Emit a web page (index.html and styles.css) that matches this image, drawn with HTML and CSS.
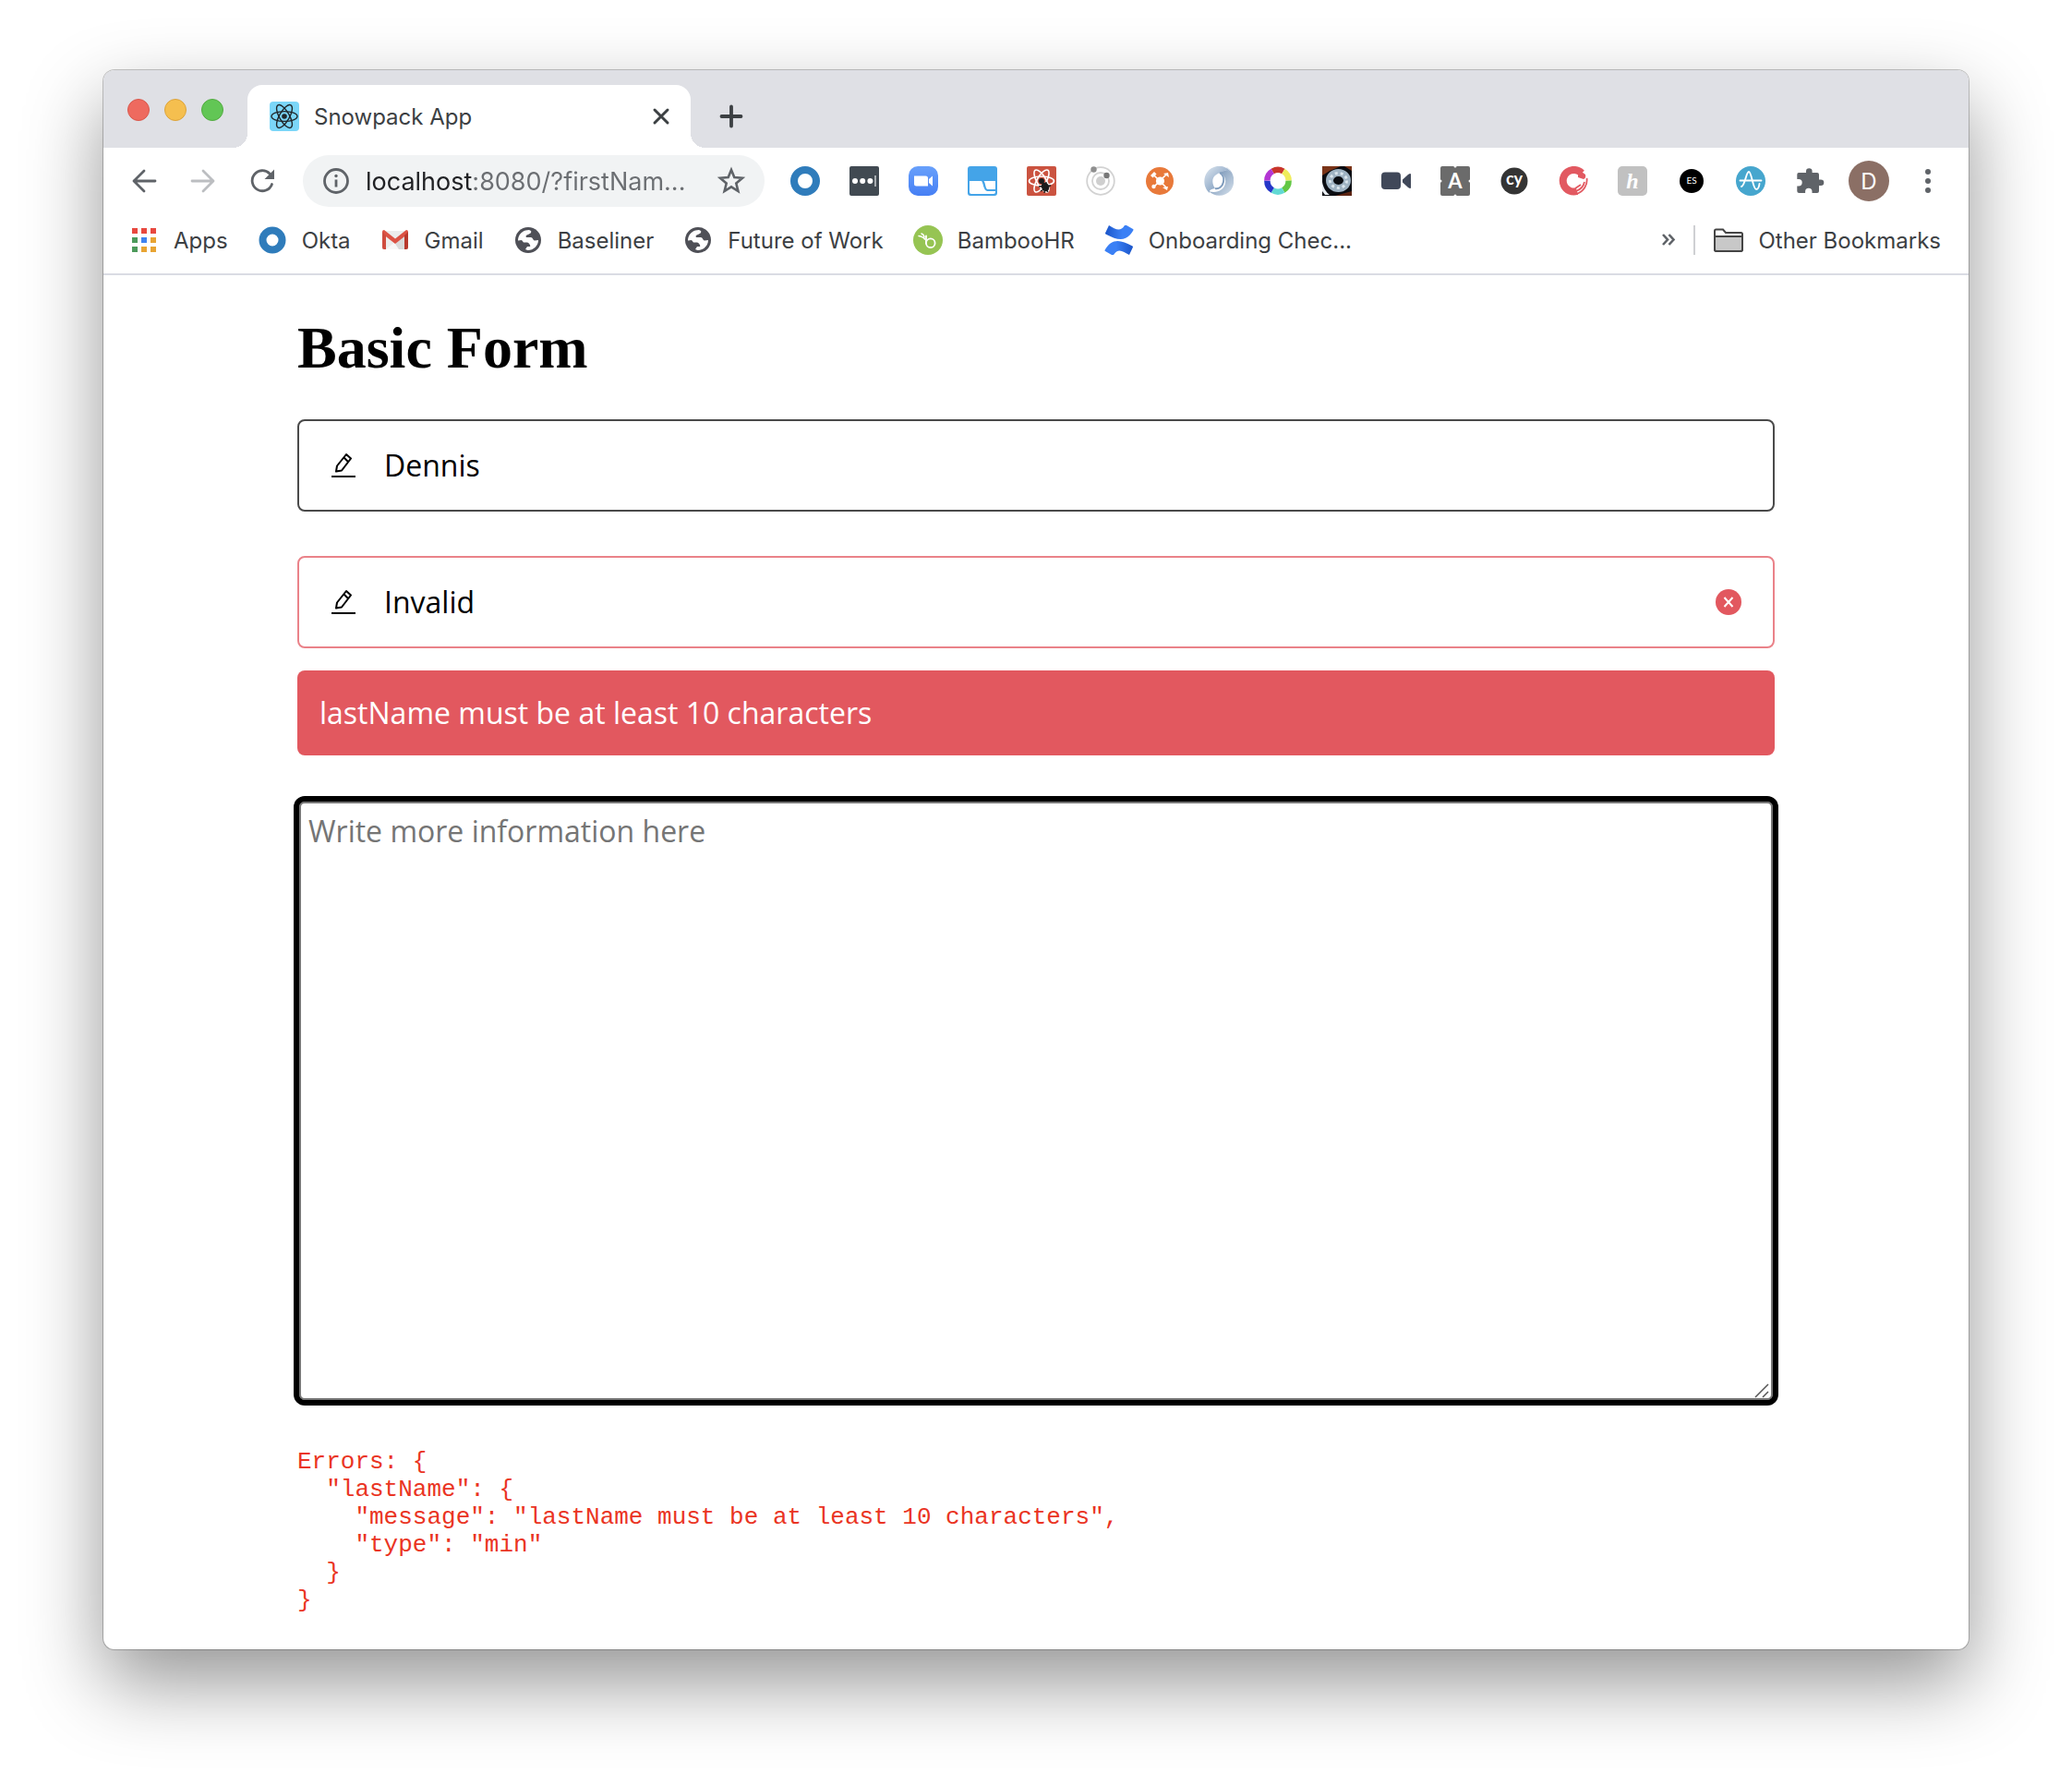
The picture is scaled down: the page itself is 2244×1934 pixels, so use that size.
FILE: index.html
```html
<!DOCTYPE html>
<html lang="en">
<head>
<meta charset="utf-8">
<meta name="viewport" content="width=device-width, initial-scale=1">
<title>Snowpack App</title>
<link rel="stylesheet" href="styles.css">
</head>
<body>
<div class="window">
  <header class="chrome">
    <div class="tab-strip">
      <div class="lights">
        <button class="light light-close" aria-label="Close window"></button>
        <button class="light light-minimise" aria-label="Minimise window"></button>
        <button class="light light-zoom" aria-label="Zoom window"></button>
      </div>
      <div class="tab">
        <svg class="icon" viewBox="0 0 32 32" aria-hidden="true">
          <rect width="32" height="32" rx="4" fill="#7bd6f8"/>
          <g fill="none" stroke="#20272b" stroke-width="1.4">
            <ellipse cx="16" cy="16" rx="14" ry="5.4"/>
            <ellipse cx="16" cy="16" rx="14" ry="5.4" transform="rotate(60 16 16)"/>
            <ellipse cx="16" cy="16" rx="14" ry="5.4" transform="rotate(120 16 16)"/>
          </g>
          <circle cx="16" cy="16" r="2.8" fill="#20272b"/>
        </svg>
        <span class="tab-title">Snowpack App</span>
        <button class="tab-close" aria-label="Close tab">
          <svg class="icon" viewBox="0 0 32 32"><path d="M9 9l14 14M23 9L9 23" stroke="#3c4043" stroke-width="3" stroke-linecap="round"/></svg>
        </button>
      </div>
      <button class="new-tab" aria-label="New tab">
        <svg class="icon" viewBox="0 0 32 32"><path d="M16 5.500v21M5.500 16h21" stroke="#3c4043" stroke-width="3.800" stroke-linecap="round"/></svg>
      </button>
    </div>

    <div class="toolbar">
      <button class="tool" aria-label="Back">
        <svg class="icon" viewBox="0 0 32 32" fill="none" stroke="#5f6368" stroke-width="2.800" stroke-linecap="round" stroke-linejoin="round"><path d="M28 16H5M16 5L5 16l11 11"/></svg>
      </button>
      <button class="tool" aria-label="Forward">
        <svg class="icon" viewBox="0 0 32 32" fill="none" stroke="#bcbec1" stroke-width="2.800" stroke-linecap="round" stroke-linejoin="round"><path d="M4 16h23M16 5l11 11-11 11"/></svg>
      </button>
      <button class="tool" aria-label="Reload">
        <svg class="icon" viewBox="0 0 32 32"><path d="M26.500 19.500A11 11 0 1 1 24 8" fill="none" stroke="#5f6368" stroke-width="2.800" stroke-linecap="round"/><path d="M29 3.500V14H18.500z" fill="#5f6368"/></svg>
      </button>
      <div class="omnibox">
        <svg class="icon" viewBox="0 0 32 32"><circle cx="16" cy="16" r="12.500" fill="none" stroke="#5f6368" stroke-width="2.800"/><path d="M16 14.500v8" stroke="#5f6368" stroke-width="2.800"/><circle cx="16" cy="10.500" r="1.700" fill="#5f6368"/></svg>
        <input class="url" type="text" aria-label="Address" value="localhost:8080/?firstNam...">
        <button class="star" aria-label="Bookmark this page">
          <svg class="icon" viewBox="0 0 32 32"><path d="M16 4l3.300 8.100 8.700.700-6.700 5.700 2.100 8.500L16 22.400 8.600 27l2.100-8.500L4 12.800l8.700-.700z" fill="none" stroke="#5f6368" stroke-width="2.600"/></svg>
        </button>
      </div>
      <button class="tool" aria-label="Okta">
        <svg class="icon" viewBox="0 0 32 32"><circle cx="16" cy="16" r="12" fill="none" stroke="#2f7cbb" stroke-width="8"/></svg>
      </button>
      <button class="tool" aria-label="Password manager">
        <svg class="icon" viewBox="0 0 32 32"><rect width="32" height="32" rx="2" fill="#414a52"/><g fill="#fff"><circle cx="6" cy="16" r="3"/><circle cx="14.200" cy="16" r="3"/><circle cx="22.400" cy="16" r="3"/></g><path d="M28 10v12" stroke="#b4b8bc" stroke-width="1.800"/></svg>
      </button>
      <button class="tool" aria-label="Video meeting">
        <svg class="icon" viewBox="0 0 32 32"><defs><linearGradient id="zoom" x1="0" y1="0" x2="0" y2="1"><stop offset="0" stop-color="#68a0fb"/><stop offset="1" stop-color="#467ff4"/></linearGradient></defs><rect width="32" height="32" rx="10" fill="url(#zoom)"/><path d="M6 10.500h12.500q2.500 0 2.500 2.500v8.500H8.500Q6 21.500 6 19zM22 14l4-3.500v11L22 18z" fill="#fff"/></svg>
      </button>
      <button class="tool" aria-label="Window layout">
        <svg class="icon" viewBox="0 0 32 32"><rect width="32" height="32" rx="3" fill="#44a4e8"/><path d="M2 16h13c2 2 2 10 6 11h9v1q0 2-2 2H4q-2 0-2-2z" fill="#fff"/><path d="M17.500 16H30v9h-8c-3 0-2.500-7-4.500-9z" fill="#fff"/></svg>
      </button>
      <button class="tool" aria-label="React developer tools">
        <svg class="icon" viewBox="0 0 32 32"><rect width="32" height="32" rx="2" fill="#cb5340"/><g fill="none" stroke="#fff" stroke-width="1.600"><ellipse cx="16" cy="16" rx="13.500" ry="5"/><ellipse cx="16" cy="16" rx="13.500" ry="5" transform="rotate(60 16 16)"/><ellipse cx="16" cy="16" rx="13.500" ry="5" transform="rotate(120 16 16)"/></g><circle cx="16" cy="16" r="3" fill="#1c1c1c"/><ellipse cx="20" cy="22.500" rx="4" ry="5" fill="#1c1c1c" transform="rotate(-25 20 22.500)"/><path d="M13 22l13-1M15 27l11-6M17 18l6 10M19 29l2-12" stroke="#1c1c1c" stroke-width="1.400"/></svg>
      </button>
      <button class="tool" aria-label="Orbit">
        <svg class="icon" viewBox="0 0 32 32"><circle cx="16" cy="16" r="5" fill="#cfcfcf"/><g fill="none" stroke="#d2d2d2" stroke-width="1.800"><circle cx="16" cy="16" r="9"/><circle cx="16" cy="16" r="14.800"/></g><circle cx="8.500" cy="3.500" r="3.200" fill="#8f8f8f"/><circle cx="22.500" cy="10" r="3.200" fill="#777"/></svg>
      </button>
      <button class="tool" aria-label="Network hub">
        <svg class="icon" viewBox="0 0 32 32"><circle cx="16" cy="16" r="15" fill="#e8793a"/><circle cx="16.500" cy="16" r="4.600" fill="#fff"/><g stroke="#fff" stroke-width="1.600"><path d="M9 9l14 14M23 9L10 22"/></g><path d="M6 10l4-4 2.500 2.500-4 4z" fill="#fff"/><path d="M20 8l5-1 1 5zM19 23l6-1-1 4z" fill="#fff"/><circle cx="9.500" cy="22" r="2.200" fill="#fff"/></svg>
      </button>
      <button class="tool" aria-label="JSON viewer">
        <svg class="icon" viewBox="0 0 32 32"><defs><linearGradient id="json1" x1="0" y1="0" x2="1" y2="1"><stop offset="0" stop-color="#dfe8f1"/><stop offset="1" stop-color="#5f83ad"/></linearGradient><linearGradient id="json2" x1="1" y1="1" x2="0" y2="0"><stop offset="0" stop-color="#d3dfeb"/><stop offset="1" stop-color="#3d6696"/></linearGradient></defs><path d="M6 29C-3 22-2 3 14 0c6-1 13 2 16 8-4-4-9-4-12-1C9 9 7 17 12 24c-3 1-7 1-6 5z" fill="url(#json1)"/><path d="M21 0c12 3 14 18 8 26-6 7-17 8-24 1 8 3 17-1 18-9 1-5-2-9-6-11 5-3 9-3 12 0-1-3-4-6-8-7z" fill="url(#json2)" opacity=".85"/><path d="M12 24c4 1 8-2 9-7 1-4-1-8-4-10" fill="none" stroke="#7f9cbd" stroke-width="2"/></svg>
      </button>
      <button class="tool" aria-label="Colour picker">
        <svg class="icon" viewBox="0 0 32 32" fill="none" stroke-width="6.500"><path d="M10.200 5.500a11.600 11.600 0 0 1 11.600 0" stroke="#c8352b"/><path d="M21.800 5.500a11.600 11.600 0 0 1 5.800 10.100" stroke="#efec5c"/><path d="M27.600 15.600a11.600 11.600 0 0 1-5.800 10.400" stroke="#62c744"/><path d="M21.800 26a11.600 11.600 0 0 1-11.600 0" stroke="#62d9d4"/><path d="M10.200 26a11.600 11.600 0 0 1-5.800-10.400" stroke="#2536c8"/><path d="M4.400 15.600A11.600 11.600 0 0 1 10.200 5.500" stroke="#b336d3"/></svg>
      </button>
      <button class="tool" aria-label="Lens">
        <svg class="icon" viewBox="0 0 32 32"><rect width="32" height="32" fill="#0b0d12"/><path d="M0 0h20L8 5 0 10zM24 0h8v5z" fill="#7a3418"/><path d="M0 17c1 6 4 11 8 14H3L0 27z" fill="#e9edf2"/><path d="M14 32l18-5v5z" fill="#5d2513"/><ellipse cx="17.500" cy="15.500" rx="9.500" ry="8.500" fill="none" stroke="#9fb3c3" stroke-width="8"/><ellipse cx="17.500" cy="15.500" rx="9" ry="8" fill="none" stroke="#dbe6ee" stroke-width="3" stroke-dasharray="3 3"/></svg>
      </button>
      <button class="tool" aria-label="Record video">
        <svg class="icon" viewBox="0 0 32 32" fill="#404859"><rect y="6.500" width="21" height="18.500" rx="4"/><path d="M23 14.500l6-5.500q3-2 3 0v14q0 2-3 0l-6-5.500z"/></svg>
      </button>
      <button class="tool" aria-label="Accessibility">
        <svg class="icon" viewBox="0 0 32 32"><rect width="32" height="32" rx="2" fill="#6b6b6b"/><g fill="#fff"><circle cx="16" cy="0" r="1.500"/><circle cx="16" cy="32" r="1.500"/><circle cx="0" cy="16" r="1.500"/><circle cx="32" cy="16" r="1.500"/></g><text x="16" y="24" class="mark mark-a">A</text></svg>
      </button>
      <button class="tool" aria-label="Cypress">
        <svg class="icon" viewBox="0 0 32 32"><circle cx="16" cy="16" r="14.500" fill="#343434"/><text x="16" y="20" class="mark mark-cy">cy</text></svg>
      </button>
      <button class="tool" aria-label="Screen capture">
        <svg class="icon" viewBox="0 0 32 32"><path d="M25 7.500A11.800 11.800 0 1 0 20 27" fill="none" stroke="#e25961" stroke-width="8"/><path d="M21 3l8 6q1 4-2 5l-6-2z" fill="#e25961"/><path d="M30.500 13c1 7-3 14-11 17M28 17c-1 5-4 8-9 10M24 20l-6 4" fill="none" stroke="#e25961" stroke-width="1.800"/></svg>
      </button>
      <button class="tool" aria-label="Honey">
        <svg class="icon" viewBox="0 0 32 32"><rect width="32" height="32" rx="5" fill="#c1c1c1"/><text x="16" y="24" class="mark mark-h">h</text></svg>
      </button>
      <button class="tool" aria-label="ES">
        <svg class="icon" viewBox="0 0 32 32"><circle cx="16" cy="16" r="13" fill="#000"/><text x="16" y="19" class="mark mark-es">ES</text></svg>
      </button>
      <button class="tool" aria-label="Analytics">
        <svg class="icon" viewBox="0 0 32 32"><circle cx="16" cy="16" r="16" fill="#46a6ce"/><path d="M4.500 15.500h23M6 22C10 21 11 6 14 6c3 0 4.500 19 8 19 2 0 3-2 3.500-6" fill="none" stroke="#fff" stroke-width="1.900" stroke-linecap="round"/></svg>
      </button>
      <button class="tool" aria-label="Extensions">
        <svg class="icon" viewBox="0 0 32 32"><path d="M4 7h8V5.500a3.300 3.300 0 0 1 6.600 0V7H24q2 0 2 2v5.500h2a3.300 3.300 0 0 1 0 6.600h-2V27q0 2-2 2h-5.500v-1.500a3.700 3.700 0 0 0-7.400 0V29H4.500Q2.300 29 2.300 27v-5.500H4a3.700 3.700 0 0 0 0-7.400H2.300V9Q2.300 7 4 7z" fill="#5f6368"/></svg>
      </button>
      <button class="tool" aria-label="Profile"><span class="avatar">D</span></button>
      <button class="tool" aria-label="Menu">
        <svg class="icon" viewBox="0 0 32 32" fill="#5f6368"><circle cx="16" cy="6" r="3"/><circle cx="16" cy="16" r="3"/><circle cx="16" cy="26" r="3"/></svg>
      </button>
    </div>

    <nav class="bookmarks" aria-label="Bookmarks">
      <a class="bookmark" href="#">
        <svg class="icon" viewBox="0 0 32 32"><path d="M3 3h6v6H3zM13 3h6v6h-6zM23 3h6v6h-6z" fill="#e8483f"/><path d="M3 13h6v6H3zM3 23h6v6H3z" fill="#4c9a5b"/><path d="M13 13h6v6h-6z" fill="#3f83f0"/><path d="M23 13h6v6h-6zM13 23h6v6h-6zM23 23h6v6h-6z" fill="#e8a433"/></svg>
        <span>Apps</span>
      </a>
      <a class="bookmark" href="#">
        <svg class="icon" viewBox="0 0 32 32"><circle cx="16" cy="16" r="10.500" fill="none" stroke="#2f7cbb" stroke-width="8"/></svg>
        <span>Okta</span>
      </a>
      <a class="bookmark" href="#">
        <svg class="icon" viewBox="0 0 32 32"><path d="M2 6h28v20H2z" fill="#ececec"/><path d="M6 26l10-8 10 8z" fill="#f8f8f8"/><path d="M16 20L28 8v18h-8z" fill="#dadada"/><path d="M2 7q0-2 2-2l12 9.500L28 5q2 0 2 2v2L16 20 2 9z" fill="#dc5244"/><path d="M2 7l4 4v15H4q-2 0-2-2z" fill="#cf4b3e"/><path d="M30 7l-4 4v15h2q2 0 2-2z" fill="#b8392d"/></svg>
        <span>Gmail</span>
      </a>
      <a class="bookmark" href="#">
        <svg class="icon" viewBox="0 0 32 32"><circle cx="16" cy="16" r="14" fill="#4f5057"/><path d="M5 16.500C5 10 10 5 17 5l2 1c1 2-1 3-3 4-2 0-3 2-2 3h5c2 0 2 3 4 3.500l4-.500c0 6-5 11-11.500 11L13 26l2-3h3c1-1-1-4-3-4.500H11L9 16z" fill="#fff"/></svg>
        <span>Baseliner</span>
      </a>
      <a class="bookmark" href="#">
        <svg class="icon" viewBox="0 0 32 32"><circle cx="16" cy="16" r="14" fill="#4f5057"/><path d="M5 16.500C5 10 10 5 17 5l2 1c1 2-1 3-3 4-2 0-3 2-2 3h5c2 0 2 3 4 3.500l4-.500c0 6-5 11-11.500 11L13 26l2-3h3c1-1-1-4-3-4.500H11L9 16z" fill="#fff"/></svg>
        <span>Future of Work</span>
      </a>
      <a class="bookmark" href="#">
        <svg class="icon" viewBox="0 0 32 32"><circle cx="16" cy="16" r="16" fill="#96c453"/><g fill="none" stroke="#fff" stroke-width="1.800" stroke-linecap="round"><path d="M14 11.500v8"/><circle cx="18.800" cy="19.200" r="4.800"/><path d="M12.500 15C11 12.500 9 12 6 11.500M12 13c0-2-1-3-3-4" stroke-width="1.500"/></g></svg>
        <span>BambooHR</span>
      </a>
      <a class="bookmark" href="#">
        <svg class="icon" viewBox="0 0 32 32"><defs><linearGradient id="conf1" x1="0" y1="0" x2="1" y2="0"><stop offset="0" stop-color="#1b55c9"/><stop offset=".6" stop-color="#3b80f5"/></linearGradient><linearGradient id="conf2" x1="1" y1="0" x2="0" y2="0"><stop offset="0" stop-color="#1b55c9"/><stop offset=".6" stop-color="#3b80f5"/></linearGradient></defs><path d="M5 0C12 4 17 8 22 0q.500-.800 1.500-.300L31 4q.800.500.300 1.500C24 18 15 17 1.500 9.500Q.800 9 1.200 8z" fill="url(#conf1)"/><path d="M27 32C20 28 15 24 10 32q-.500.800-1.500.300L1 28q-.800-.500-.300-1.500C8 14 17 15 30.500 22.500q.700.500.300 1.500z" fill="url(#conf2)"/></svg>
        <span>Onboarding Chec...</span>
      </a>
      <button class="more" aria-label="More bookmarks">
        <svg class="icon" viewBox="0 0 32 32" fill="none" stroke="#5f6368" stroke-width="2.600"><path d="M11 10l5 5.500-5 5.500M17.500 10l5 5.500-5 5.500"/></svg>
      </button>
      <span class="divider"></span>
      <a class="bookmark other" href="#">
        <svg class="icon" viewBox="0 0 32 32"><path d="M1 26V6q0-1.500 1.500-1.500H10l3 3.500h16.500Q31 8 31 9.500V26q0 2-2 2H3q-2 0-2-2z" fill="#fff" stroke="#444" stroke-width="2"/><path d="M1 12h30v14q0 2-2 2H3q-2 0-2-2z" fill="#c8c8c8" stroke="#444" stroke-width="2"/></svg>
        <span>Other Bookmarks</span>
      </a>
    </nav>
  </header>

  <main class="page">
    <h1>Basic Form</h1>
    <form class="form">
      <label class="field">
        <svg class="field-icon" viewBox="0 0 28 28" fill="none" stroke="#000" stroke-width="2"><path d="M1 26h26M6 20.500l1-6L17 2l5 4.500L12 19.500zM14.500 5.500l4 4" stroke-linejoin="round"/></svg>
        <input type="text" name="firstName" aria-label="First name" value="Dennis">
      </label>
      <div class="group">
        <label class="field field-invalid">
          <svg class="field-icon" viewBox="0 0 28 28" fill="none" stroke="#000" stroke-width="2"><path d="M1 26h26M6 20.500l1-6L17 2l5 4.500L12 19.500zM14.500 5.500l4 4" stroke-linejoin="round"/></svg>
          <input type="text" name="lastName" aria-label="Last name" aria-invalid="true" value="Invalid">
          <svg class="field-icon" viewBox="0 0 28 28"><circle cx="14" cy="14" r="14" fill="#e2585f"/><path d="M9.500 9l9 10M18.500 9l-9 10" stroke="#fff" stroke-width="2"/></svg>
        </label>
        <p class="error" role="alert">lastName must be at least 10 characters</p>
      </div>
      <div class="area">
        <textarea name="information" aria-label="More information" placeholder="Write more information here"></textarea>
        <svg class="grip" viewBox="0 0 16 16" stroke="#555" stroke-width="1.500" aria-hidden="true"><path d="M1 15L15 1M9 15l6-6"/></svg>
      </div>
    </form>
    <pre class="dump">Errors: {
  "lastName": {
    "message": "lastName must be at least 10 characters",
    "type": "min"
  }
}</pre>
  </main>
</div>
</body>
</html>
```
FILE: styles.css
```css
* {
  box-sizing: border-box;
}

body {
  margin: 0;
  padding: 76px 112px 148px;
  background: #fff;
  font-family: Inter, "Liberation Sans", sans-serif;
  font-size: 24px;
  color: #3c4043;
}

button {
  padding: 0;
  border: 0;
  background: none;
  color: inherit;
  font: inherit;
}

.window {
  border-radius: 12px;
  background: #fff;
  box-shadow: 0 0 0 1px rgba(0, 0, 0, .22), 0 36px 84px rgba(0, 0, 0, .42);
}

.icon {
  display: block;
  flex: none;
  width: 32px;
  height: 32px;
}

/* Tab strip */
.tab-strip {
  display: flex;
  height: 84px;
  border-radius: 12px 12px 0 0;
  background: #dfe0e5;
}

.lights {
  display: flex;
  align-items: center;
  gap: 16px;
  width: 156px;
  padding: 2px 0 0 26px;
}

.light {
  width: 24px;
  height: 24px;
  border: 1px solid;
  border-radius: 50%;
}

.light-close {
  border-color: #d9584c;
  background: #ee6a5f;
}

.light-minimise {
  border-color: #dca33a;
  background: #f5bf4f;
}

.light-zoom {
  border-color: #53ab41;
  background: #62c655;
}

.tab {
  position: relative;
  display: flex;
  align-items: center;
  gap: 16px;
  width: 480px;
  margin-top: 16px;
  padding: 0 16px 0 24px;
  border-radius: 16px 16px 0 0;
  background: #fff;
}

.tab::before,
.tab::after {
  content: "";
  position: absolute;
  bottom: 0;
  width: 16px;
  height: 16px;
}

.tab::before {
  right: 100%;
  background: radial-gradient(circle at 0 0, transparent 16px, #fff 16px);
}

.tab::after {
  left: 100%;
  background: radial-gradient(circle at 100% 0, transparent 16px, #fff 16px);
}

.tab-title {
  flex: 1;
}

.new-tab {
  display: grid;
  place-items: center;
  width: 48px;
  margin: 16px 0 0 20px;
}

/* Toolbar */
.toolbar {
  display: flex;
  align-items: center;
  height: 72px;
  padding: 0 12px;
}

.tool {
  display: grid;
  place-items: center;
  flex: none;
  width: 64px;
  height: 56px;
}

.omnibox {
  display: flex;
  flex: 1;
  align-items: center;
  gap: 16px;
  min-width: 0;
  height: 56px;
  margin: 0 12px;
  padding: 0 20px;
  border-radius: 28px;
  background: #f1f3f4;
}

.url {
  flex: 1;
  min-width: 0;
  padding: 0;
  border: 0;
  background: linear-gradient(90deg, #202124 116px, #6b6e72 116px);
  -webkit-background-clip: text;
  background-clip: text;
  color: transparent;
  font: 27px Inter, "Liberation Sans", sans-serif;
}

.avatar {
  display: grid;
  place-items: center;
  width: 44px;
  height: 44px;
  border-radius: 50%;
  background: #8b6f65;
  color: #fff;
}

.mark {
  fill: #fff;
  text-anchor: middle;
  font-family: Lato, sans-serif;
}

.mark-a {
  font-size: 22px;
  font-weight: 700;
}

.mark-cy {
  font-size: 18px;
  font-weight: 700;
}

.mark-h {
  font: italic 700 24px "Liberation Serif", serif;
}

.mark-es {
  font-size: 10px;
}

/* Bookmarks bar */
.bookmarks {
  display: flex;
  align-items: center;
  gap: 32px;
  height: 66px;
  padding: 0 30px 8px 28px;
  border-bottom: 2px solid #dadce3;
}

.bookmark {
  display: flex;
  align-items: center;
  gap: 16px;
  color: inherit;
  text-decoration: none;
  white-space: nowrap;
}

.more {
  margin-left: auto;
}

.divider {
  width: 2px;
  height: 32px;
  margin: 0 -12px 0 -20px;
  background: #cfd0d3;
}

/* Page */
.page {
  max-width: 1600px;
  margin: 0 auto;
  padding: 42px 0 38px;
}

h1 {
  margin: 0 0 40px;
  color: #000;
  font: 700 64px/74px "Liberation Serif", serif;
}

.form {
  display: grid;
  gap: 48px;
}

.group {
  display: grid;
  gap: 24px;
}

.field {
  display: flex;
  align-items: center;
  gap: 30px;
  height: 100px;
  padding: 0 34px;
  border: 2px solid #4a4a4a;
  border-radius: 8px;
}

.field-invalid {
  border-color: #ea8289;
}

.field-icon {
  flex: none;
  width: 28px;
  height: 28px;
}

.field input {
  flex: 1;
  min-width: 0;
  padding: 0;
  border: 0;
  outline: 0;
  background: none;
  color: #000;
  font: 32px/44px "Open Sans", sans-serif;
}

.error {
  margin: 0;
  padding: 24px;
  border-radius: 8px;
  background: #e2585f;
  color: #fff;
  font: 32px/44px "Open Sans", sans-serif;
}

.area {
  position: relative;
  display: grid;
}

textarea {
  height: 652px;
  padding: 10px;
  border: 2px solid #000;
  border-radius: 8px;
  outline: 0;
  box-shadow: 0 0 0 4px #000, inset 0 0 0 2px #767676;
  resize: none;
  font: 32px/44px "Open Sans", sans-serif;
}

textarea::placeholder {
  color: #757575;
}

.grip {
  position: absolute;
  right: 6px;
  bottom: 4px;
  width: 16px;
  height: 16px;
}

.dump {
  margin: 50px 0 0;
  color: #ea3423;
  font: 26px/30px "Liberation Mono", monospace;
}
```
